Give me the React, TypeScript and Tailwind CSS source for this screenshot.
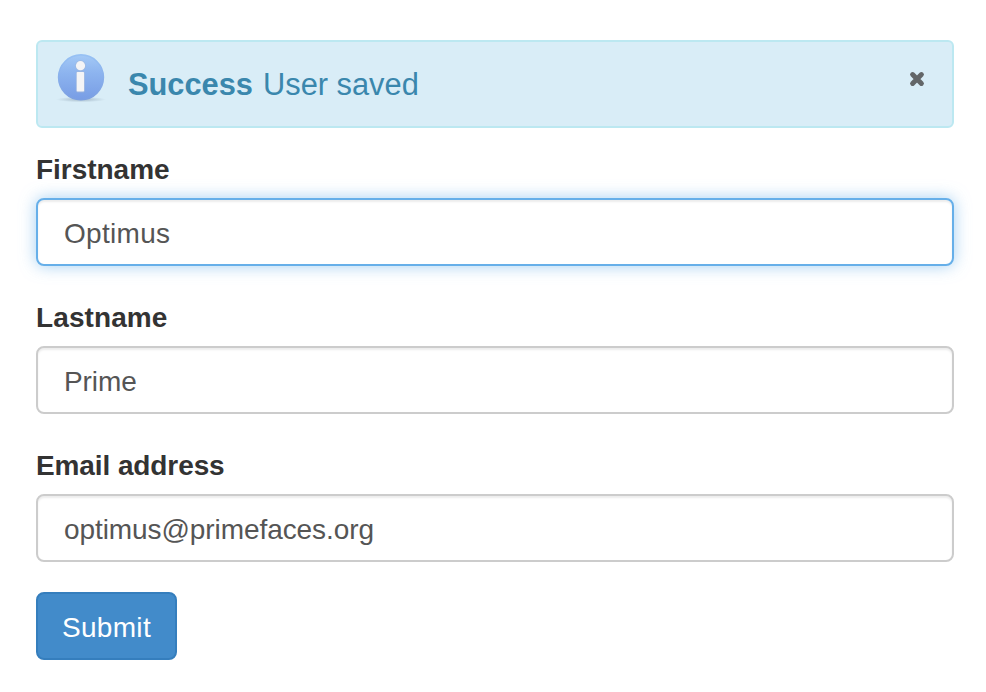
import type { ReactNode } from "react";

const fields = [
  {
    id: "firstname",
    label: "Firstname",
    value: "Optimus",
    focused: true,
    labelSpacing: "tracking-[-0.03px]",
    valueSpacing: "tracking-[0.3px]",
  },
  {
    id: "lastname",
    label: "Lastname",
    value: "Prime",
    focused: false,
    labelSpacing: "tracking-[0.1px]",
    valueSpacing: "tracking-[-0.1px]",
  },
  {
    id: "email",
    label: "Email address",
    value: "optimus@primefaces.org",
    focused: false,
    labelSpacing: "tracking-[-0.1px]",
    valueSpacing: "tracking-[-0.08px]",
  },
];

function InfoIcon() {
  return (
    <svg width="52" height="52" viewBox="0 0 52 52" className="shrink-0">
      <defs>
        <linearGradient id="disc" x1="0" y1="0" x2="0" y2="1">
          <stop offset="0" stopColor="#a3c9f6" />
          <stop offset="0.4" stopColor="#8db4ef" />
          <stop offset="1" stopColor="#789de5" />
        </linearGradient>
        <linearGradient id="rim" x1="0" y1="0" x2="0" y2="1">
          <stop offset="0" stopColor="#97c1f4" />
          <stop offset="1" stopColor="#7b9fe2" />
        </linearGradient>
        <radialGradient id="shadow">
          <stop offset="0" stopColor="#71879c" stopOpacity="0.5" />
          <stop offset="1" stopColor="#71879c" stopOpacity="0" />
        </radialGradient>
      </defs>
      <ellipse cx="25" cy="46.5" rx="25" ry="2.8" fill="url(#shadow)" />
      <circle cx="25" cy="24.3" r="22.4" fill="url(#disc)" stroke="url(#rim)" strokeWidth="1.6" />
      <g fill="#f4f4f6" stroke="#9fb6dc" strokeOpacity="0.7" strokeWidth="1.6" paintOrder="stroke">
        <circle cx="24.5" cy="12.7" r="4.6" />
        <rect x="20.7" y="19" width="7.4" height="19.6" rx="0.8" />
      </g>
    </svg>
  );
}

function CloseIcon() {
  return (
    <svg width="16" height="16" viewBox="0 0 16 16" fill="none">
      <path
        d="M3.6 3.6 12.4 12.4M12.4 3.6 3.6 12.4"
        stroke="#636668"
        strokeWidth="5"
        strokeLinecap="round"
      />
    </svg>
  );
}

function Message({ title, children }: { title: string; children: ReactNode }) {
  return (
    <div
      role="alert"
      className="flex h-[88px] items-start rounded-md border-2 border-[#bce8f1] bg-[#d9edf7] pl-[18px] text-[30.8px] leading-[44px] text-[#3a87ad]"
    >
      <div className="pt-[11px]">
        <InfoIcon />
      </div>
      <p className="flex gap-[10px] pt-[21px] pl-5">
        <strong className="font-bold">{title}</strong>
        <span>{children}</span>
      </p>
      <button type="button" aria-label="Close" className="mt-[29px] mr-[27px] ml-auto">
        <CloseIcon />
      </button>
    </div>
  );
}

export default function App() {
  return (
    <main
      className="min-h-screen bg-white pt-10 pr-8 pl-9 text-[28px] leading-10 text-[#333]"
      style={{ fontFamily: '"Liberation Sans", Arial, sans-serif' }}
    >
      <Message title="Success">User saved</Message>

      <form className="pt-5" onSubmit={(e) => e.preventDefault()}>
        {fields.map((field) => (
          <div key={field.id} className="mb-[30px]">
            <label htmlFor={field.id} className={`mb-2.5 block h-10 pt-0.5 font-bold ${field.labelSpacing}`}>
              {field.label}
            </label>
            <input
              id={field.id}
              type="text"
              defaultValue={field.value}
              className={`block h-[68px] w-full rounded-lg border-2 bg-white px-[26px] pt-1 text-[#555] outline-none ${field.valueSpacing} ${
                field.focused
                  ? "border-[#66afe9] shadow-[inset_0_2px_2px_rgba(0,0,0,0.075),0_0_16px_rgba(102,175,233,0.6)]"
                  : "border-[#ccc] shadow-[inset_0_2px_2px_rgba(0,0,0,0.075)]"
              }`}
            />
          </div>
        ))}

        <button
          type="submit"
          className="flex h-[68px] w-[141px] items-center justify-center rounded-lg border-2 border-[#357ebd] bg-[#428bca] pt-1 tracking-[0.3px] text-white"
        >
          Submit
        </button>
      </form>
    </main>
  );
}
